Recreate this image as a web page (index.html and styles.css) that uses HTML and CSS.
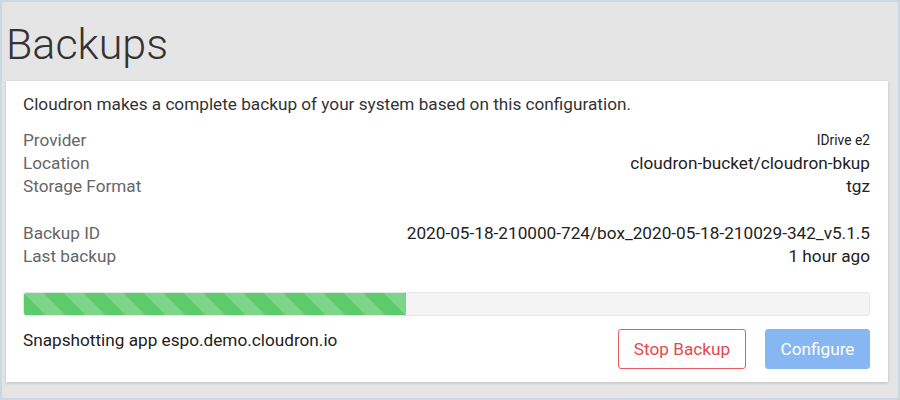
FILE: index.html
```html
<!DOCTYPE html>
<html>
<head>
<meta charset="utf-8">
<link rel="stylesheet" href="styles.css">
</head>
<body>
<div class="frame">
  <h1 class="title">Backups</h1>
  <div class="card">
    <p class="intro">Cloudron makes a complete backup of your system based on this configuration.</p>
    <div class="rows">
      <div class="row"><span class="label">Provider</span><span class="value small">IDrive e2</span></div>
      <div class="row"><span class="label">Location</span><span class="value">cloudron-bucket/cloudron-bkup</span></div>
      <div class="row"><span class="label">Storage Format</span><span class="value">tgz</span></div>
    </div>
    <div class="rows second">
      <div class="row"><span class="label">Backup ID</span><span class="value">2020-05-18-210000-724/box_2020-05-18-210029-342_v5.1.5</span></div>
      <div class="row"><span class="label">Last backup</span><span class="value">1 hour ago</span></div>
    </div>
    <div class="progress"><div class="bar" style="width:45.2%"></div></div>
    <div class="footer">
      <span class="status">Snapshotting app espo.demo.cloudron.io</span>
      <div class="actions">
        <button class="btn btn-stop">Stop Backup</button>
        <button class="btn btn-config">Configure</button>
      </div>
    </div>
  </div>
</div>
</body>
</html>
```
FILE: styles.css
```css
html, body {
  margin: 0;
  padding: 0;
}
body {
  font-family: Roboto, "Liberation Sans", sans-serif;
  color: #333;
}
.frame {
  width: 900px;
  height: 400px;
  box-sizing: border-box;
  border: 2px solid #cbd8e0;
  background: #e5e5e5;
  padding: 0 10px 0 4px;
  overflow: hidden;
}
.title {
  margin: 0;
  padding: 14px 0 0 0;
  height: 65px;
  font-weight: 300;
  font-size: 43px;
  line-height: 56px;
  color: #333;
}
.card {
  background: #fff;
  box-shadow: 0 1px 3px rgba(0,0,0,0.18);
  padding: 12px 18px 13px 17px;
}
.intro {
  margin: 0 0 14px 0;
  font-size: 17.2px;
  line-height: 22px;
  color: #333;
}
.rows {
  display: flex;
  flex-direction: column;
}
.rows.second {
  margin-top: 24px;
}
.row {
  display: flex;
  justify-content: space-between;
  align-items: center;
  height: 23px;
  font-size: 17.2px;
  line-height: 23px;
}
.label {
  color: #666;
}
.value {
  color: #222;
}
.value.small {
  font-size: 13.8px;
}
.progress {
  margin-top: 24px;
  height: 24px;
  box-sizing: border-box;
  background: #f4f4f4;
  border: 1px solid #e6e6e6;
  border-radius: 3px;
  overflow: hidden;
}
.bar {
  height: 100%;
  background-color: #5dca6c;
  background-image: linear-gradient(45deg, rgba(255,255,255,0.2) 25%, transparent 25%, transparent 50%, rgba(255,255,255,0.2) 50%, rgba(255,255,255,0.2) 75%, transparent 75%, transparent);
  background-size: 40px 40px;
}
.footer {
  display: flex;
  justify-content: space-between;
  align-items: flex-start;
  margin-top: 13px;
}
.status {
  font-size: 17.2px;
  line-height: 22px;
  color: #222;
}
.actions {
  display: flex;
  gap: 19px;
}
.btn {
  font-family: Roboto, "Liberation Sans", sans-serif;
  font-size: 17.2px;
  height: 40px;
  box-sizing: border-box;
  border-radius: 3px;
  padding: 0 10px;
  cursor: pointer;
}
.btn-stop {
  width: 128px;
  background: #fff;
  color: #e5484d;
  border: 1px solid #ea5a5f;
}
.btn-config {
  width: 105px;
  background: #86b7f2;
  color: #fff;
  border: 1px solid #86b7f2;
}
```
